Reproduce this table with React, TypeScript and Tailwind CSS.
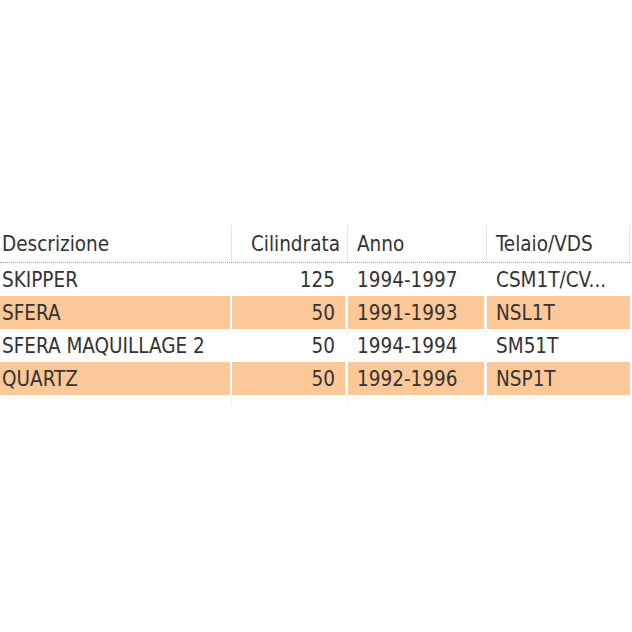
import React from "react";

const rows = [
  { d: "SKIPPER", c: "125", a: "1994-1997", t: "CSM1T/CV...", hl: false },
  { d: "SFERA", c: "50", a: "1991-1993", t: "NSL1T", hl: true },
  { d: "SFERA MAQUILLAGE 2", c: "50", a: "1994-1994", t: "SM51T", hl: false },
  { d: "QUARTZ", c: "50", a: "1992-1996", t: "NSP1T", hl: true },
];

export default function App() {
  return (
    <div
      className="w-[632px] h-[632px] bg-white text-[#333333] text-[20.5px]"
      style={{ fontFamily: '"DejaVu Sans Condensed", "DejaVu Sans", sans-serif' }}
    >
      <div className="pt-[225px] w-[630px]">
        <div className="flex h-[38px] items-center border-b border-dotted border-[#9a9a9a]">
          <div className="w-[232px] h-full flex items-center pl-[2px] pt-[1px] border-r border-[#e4e4e4]">Descrizione</div>
          <div className="w-[116px] h-full flex items-center justify-end pr-[7px] pt-[1px] border-r border-[#e4e4e4]">Cilindrata</div>
          <div className="w-[139px] h-full flex items-center pl-[9px] pt-[1px] border-r border-[#e4e4e4]">Anno</div>
          <div className="flex-1 h-full flex items-center pl-[9px] pt-[1px] border-r border-[#e4e4e4]">Telaio/VDS</div>
        </div>
        {rows.map((r, i) => (
          <div key={i} className="flex h-[33px]">
            <div className={`w-[232px] h-full flex items-center pl-[2px] pt-[1px] border-r-[2px] border-white ${r.hl ? "bg-[#fdc898]" : ""}`}>{r.d}</div>
            <div className={`w-[116px] h-full flex items-center justify-end pr-[10px] pt-[1px] border-r-[3px] border-white ${r.hl ? "bg-[#fdc898]" : ""}`}>{r.c}</div>
            <div className={`w-[139px] h-full flex items-center pl-[9px] pt-[1px] border-r-[3px] border-white ${r.hl ? "bg-[#fdc898]" : ""}`}>{r.a}</div>
            <div className={`flex-1 h-full flex items-center pl-[9px] pt-[1px] ${r.hl ? "bg-[#fdc898]" : ""}`}>{r.t}</div>
          </div>
        ))}
        <div className="flex h-[10px]">
          <div className="w-[232px] border-r border-[#f0f0f0]" />
          <div className="w-[116px] border-r border-[#f0f0f0]" />
          <div className="w-[139px] border-r border-[#f0f0f0]" />
          <div className="flex-1" />
        </div>
      </div>
    </div>
  );
}
